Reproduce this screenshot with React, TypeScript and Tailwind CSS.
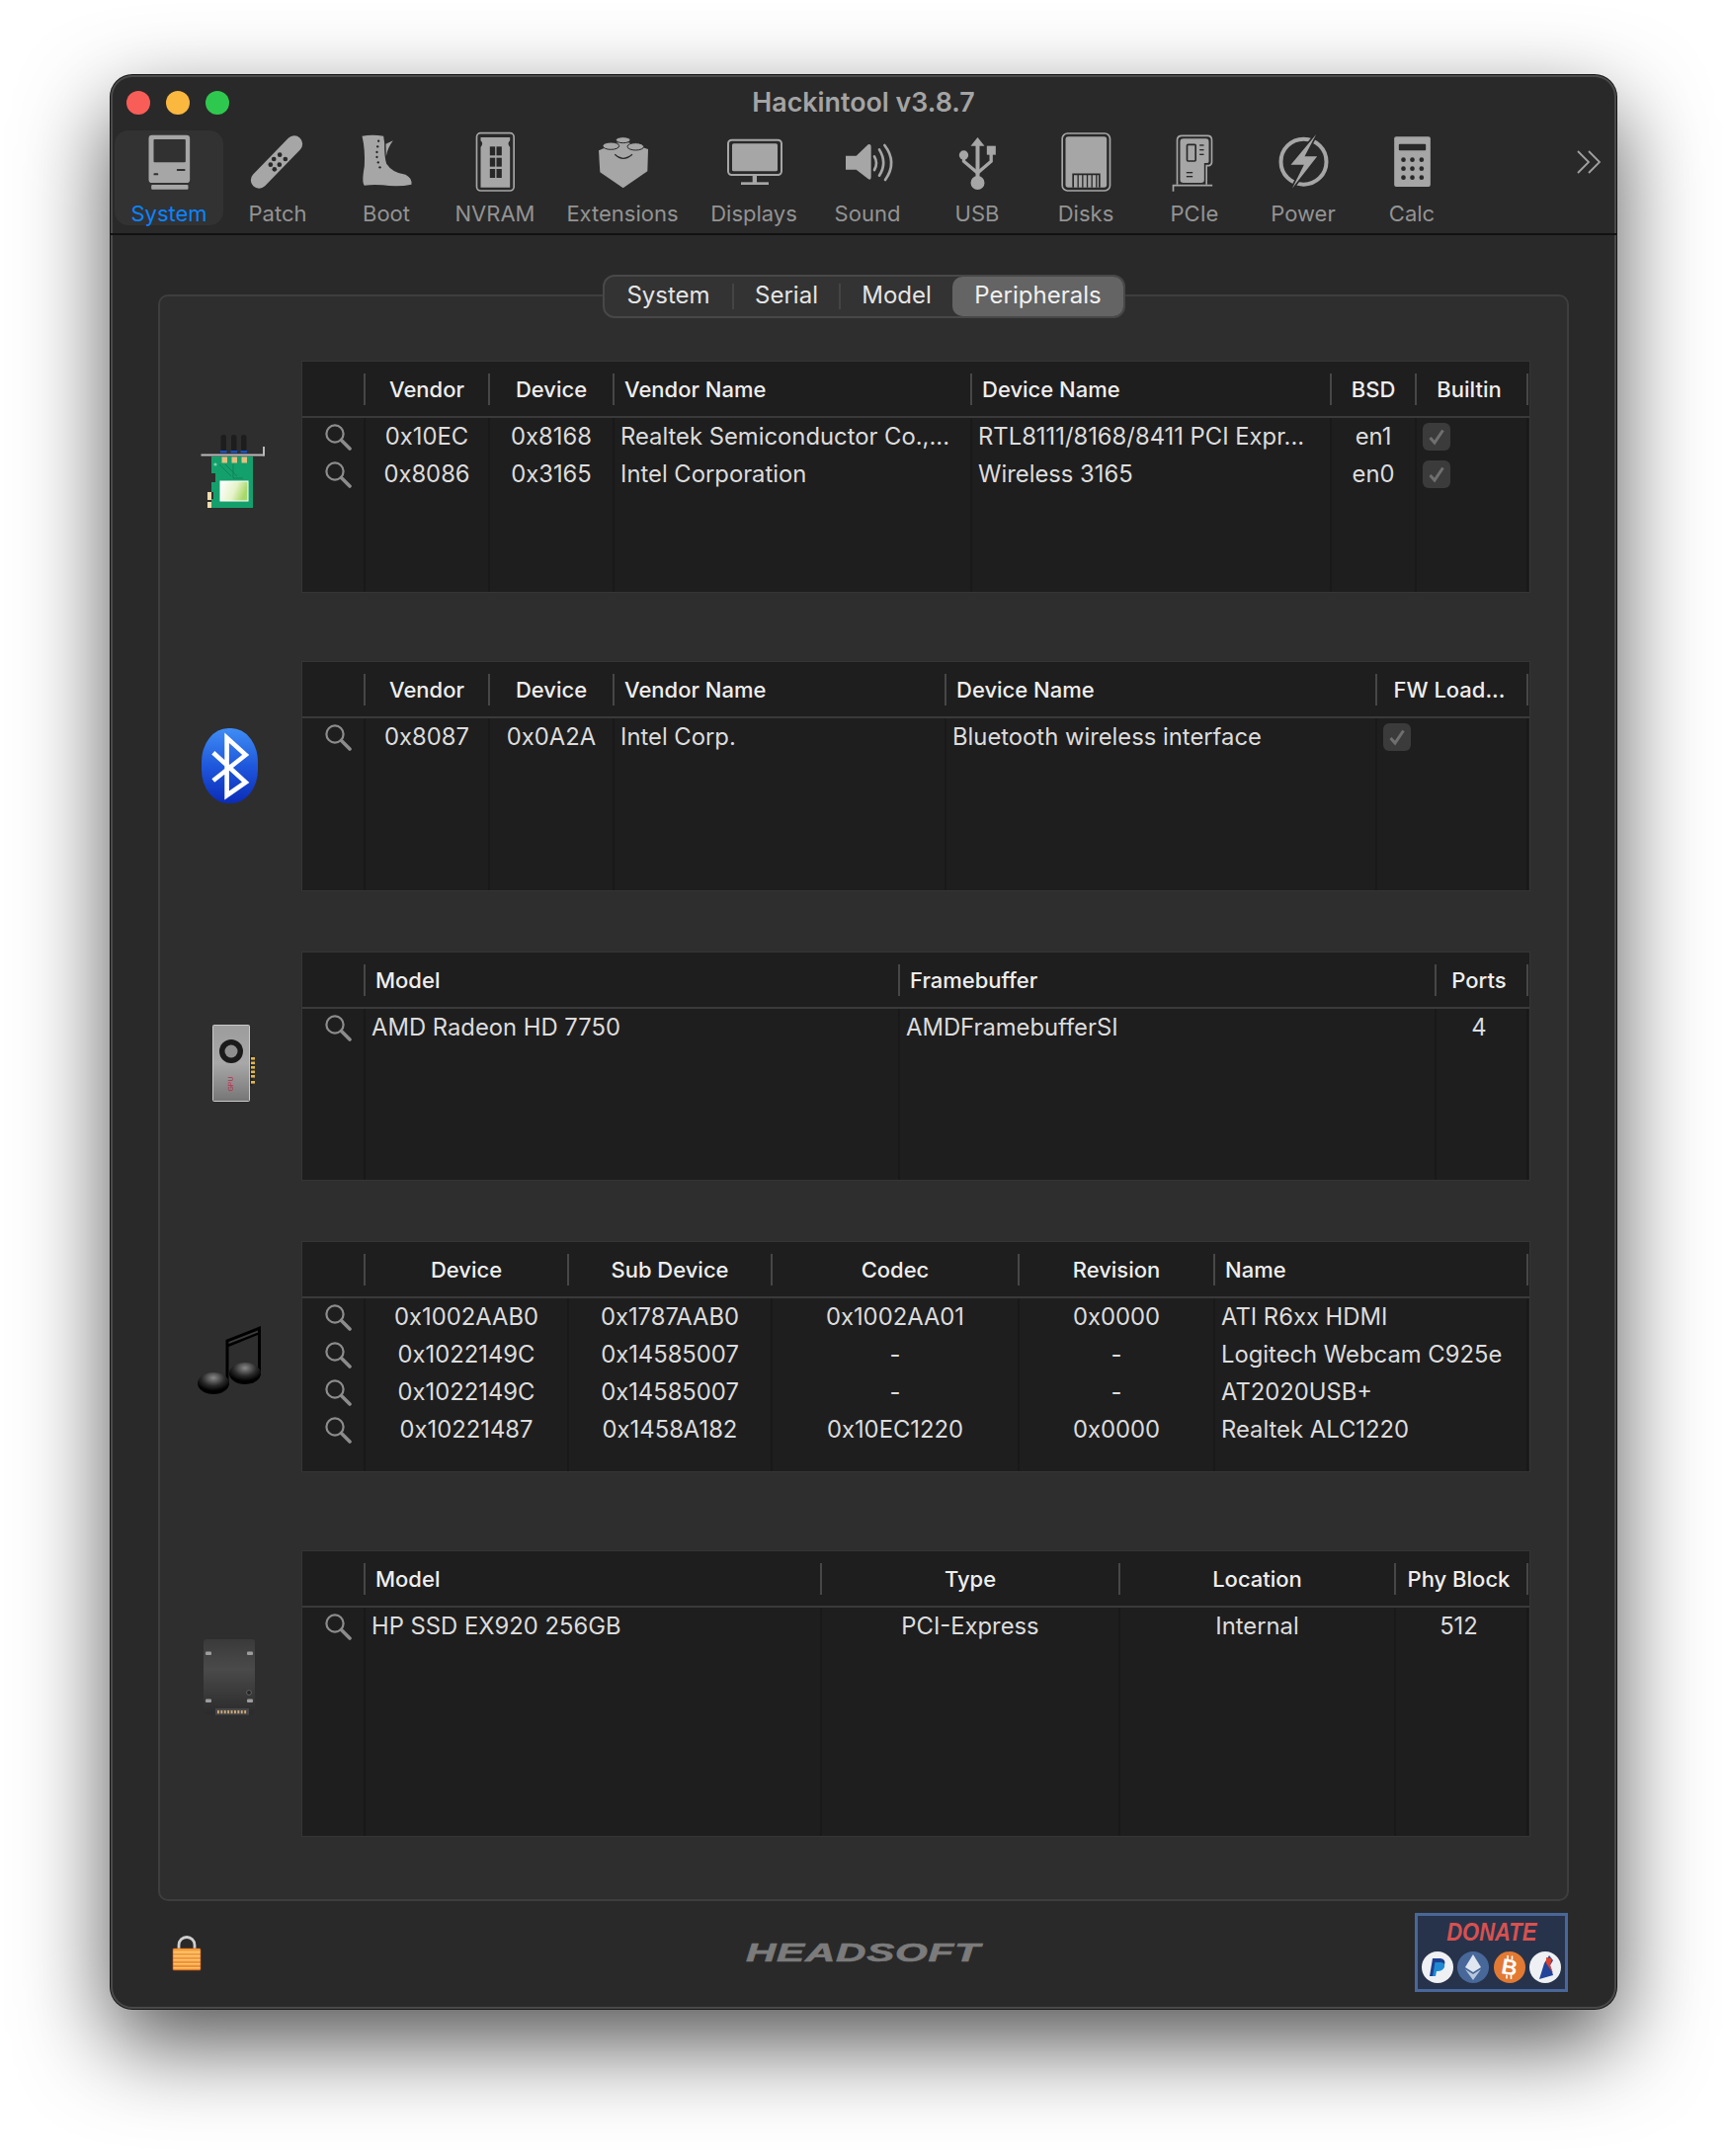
import React from "react";

const DARK = "#282828";
const G = "#a6a6a6";

function ToolIcon({ c, children }: { c: number; children: React.ReactNode }) {
  return (
    <svg width={100} height={70} viewBox={`${c - 150} 15 300 210`} className="shrink-0">
      {children}
    </svg>
  );
}

const icons: Record<string, React.ReactNode> = {
  System: (
    <ToolIcon c={151.5}>
      <rect x={90} y={35} width={125} height={145} rx={10} fill={G} />
      <rect x={105} y={48} width={97} height={70} rx={3} fill="#313131" />
      <rect x={105} y={151} width={14} height={6} rx={2} fill="#313131" />
      <rect x={175} y={138} width={26} height={6} rx={2} fill="#313131" />
      <rect x={98} y={186} width={112} height={14} rx={3} fill={G} />
    </ToolIcon>
  ),
  Patch: (
    <ToolIcon c={481.5}>
      <line x1={425} y1={172} x2={532} y2={62} stroke={G} strokeWidth={50} strokeLinecap="round" />
      {[
        [488, 95],
        [505, 108],
        [470, 108],
        [487, 125],
        [460, 125],
        [472, 139],
      ].map(([x, y]) => (
        <circle key={`${x}-${y}`} cx={x} cy={y} r={7} fill={DARK} />
      ))}
    </ToolIcon>
  ),
  Boot: (
    <ToolIcon c={811.5}>
      <path
        d="M738 38Q770 32 803 38L806 60Q805 100 812 122Q830 150 870 155Q890 165 888 185Q850 193 800 187Q770 185 745 188Q736 180 745 130Q748 80 738 38Z"
        fill={G}
      />
      <path d="M810 62L832 52Q815 75 811 100Z" fill={G} />
      {[
        [788, 53],
        [785, 70],
        [783, 87],
        [783, 102],
        [787, 118],
        [792, 133],
      ].map(([x, y]) => (
        <circle key={y} cx={x} cy={y} r={3.5} fill={DARK} />
      ))}
    </ToolIcon>
  ),
  NVRAM: (
    <ToolIcon c={1141.5}>
      <rect x={1086} y={29} width={113} height={175} rx={12} fill="none" stroke={G} strokeWidth={5} />
      <path d="M1098 42H1187V52Q1177 60 1187 72V194H1098V72Q1108 60 1098 52Z" fill={G} />
      {[70, 104, 138].map((y) =>
        [1126, 1146].map((x) => <rect key={`${x}${y}`} x={x} y={y} width={16} height={27} fill={DARK} />),
      )}
    </ToolIcon>
  ),
  Extensions: (
    <ToolIcon c={120}>
      <path d="M48 82L120 52L198 78L196 145L122 196L52 148Z" fill={G} />
      <ellipse cx={122} cy={50} rx={22} ry={9} fill={G} stroke={DARK} strokeWidth={3} />
      <ellipse cx={85} cy={68} rx={25} ry={11} fill={G} stroke={DARK} strokeWidth={3} />
      <ellipse cx={160} cy={70} rx={25} ry={11} fill={G} stroke={DARK} strokeWidth={3} />
      <path d="M97 94Q122 118 150 94" fill="none" stroke={DARK} strokeWidth={4} />
    </ToolIcon>
  ),
  Displays: (
    <ToolIcon c={519}>
      <rect x={441} y={50} width={162} height={106} rx={11} fill="none" stroke={G} strokeWidth={6} />
      <rect x={453} y={61} width={138} height={84} rx={5} fill={G} />
      <rect x={515} y={156} width={13} height={24} fill={G} />
      <rect x={480} y={178} width={84} height={8} fill={G} />
    </ToolIcon>
  ),
  Sound: (
    <ToolIcon c={864}>
      <path d="M798 98L830 98L866 64Q875 60 875 72V162Q875 174 866 168L830 140H798Z" fill={G} />
      <path d="M885 100Q897 120 885 141" fill="none" stroke={G} strokeWidth={8} strokeLinecap="round" />
      <path d="M900 79Q925 119 900 158" fill="none" stroke={G} strokeWidth={8} strokeLinecap="round" />
      <path d="M916 66Q956 118 918 171" fill="none" stroke={G} strokeWidth={8} strokeLinecap="round" />
    </ToolIcon>
  ),
  USB: (
    <ToolIcon c={1195.5}>
      <line x1={1197} y1={65} x2={1197} y2={170} stroke={G} strokeWidth={12} />
      <polygon points="1197,42 1218,68 1176,68" fill={G} />
      <circle cx={1197} cy={180} r={21} fill={G} />
      <circle cx={1155} cy={96} r={14} fill={G} />
      <rect x={1225} y={68} width={27} height={27} fill={G} />
      <path d="M1155 100V115L1197 150L1238 115V90" fill="none" stroke={G} strokeWidth={10} />
    </ToolIcon>
  ),
  Disks: (
    <ToolIcon c={115.5}>
      <rect x={44} y={30} width={145} height={174} rx={16} fill="none" stroke={G} strokeWidth={5} />
      <rect x={54} y={40} width={125} height={154} rx={8} fill={G} />
      <path d="M77 194V154H157V194" fill="none" stroke={DARK} strokeWidth={5} />
      {[92, 106, 120, 134, 148].map((x) => (
        <line key={x} x1={x} y1={154} x2={x} y2={194} stroke={DARK} strokeWidth={4} />
      ))}
    </ToolIcon>
  ),
  PCIe: (
    <ToolIcon c={445.5}>
      <path
        d="M393 185V50Q393 37 408 37H485Q498 37 498 50V118Q498 125 490 128H482V185"
        fill="none"
        stroke={G}
        strokeWidth={5}
      />
      <path
        d="M402 56Q402 46 412 46H480Q489 46 489 56V116Q489 120 482 120H475V172Q475 180 466 180H412Q402 180 402 172Z"
        fill={G}
      />
      <rect x={423} y={64} width={26} height={50} rx={3} fill="none" stroke={DARK} strokeWidth={5} />
      {[64, 78, 92].map((y) => (
        <rect key={y} x={461} y={y} width={13} height={4} fill={DARK} />
      ))}
      {[147, 159].map((y) => (
        <rect key={y} x={421} y={y} width={19} height={4} fill={DARK} />
      ))}
      <path d="M381 206V188H500" fill="none" stroke={G} strokeWidth={5} />
    </ToolIcon>
  ),
  Power: (
    <ToolIcon c={775.5}>
      <circle cx={777} cy={116} r={69} fill="none" stroke={G} strokeWidth={12} />
      <path d="M815 33L738 125H778L742 197L818 100H780Z" fill={G} stroke={DARK} strokeWidth={10} paintOrder="stroke" />
    </ToolIcon>
  ),
  Calc: (
    <ToolIcon c={1105.5}>
      <rect x={1052} y={40} width={110} height={152} rx={6} fill={G} />
      <rect x={1066} y={62} width={82} height={20} rx={3} fill={DARK} />
      {[110, 137, 164].map((y) =>
        [1080, 1107, 1135].map((x) => <circle key={`${x}${y}`} cx={x} cy={y} r={7} fill={DARK} />),
      )}
    </ToolIcon>
  ),
};

const tools: { name: string; w: string }[] = [
  { name: "System", w: "w-[110px]" },
  { name: "Patch", w: "w-[110px]" },
  { name: "Boot", w: "w-[110px]" },
  { name: "NVRAM", w: "w-[110px]" },
  { name: "Extensions", w: "w-[148px]" },
  { name: "Displays", w: "w-[118px]" },
  { name: "Sound", w: "w-[112px]" },
  { name: "USB", w: "w-[110px]" },
  { name: "Disks", w: "w-[110px]" },
  { name: "PCIe", w: "w-[110px]" },
  { name: "Power", w: "w-[110px]" },
  { name: "Calc", w: "w-[110px]" },
];

function Magnifier() {
  return (
    <svg width={28} height={28} viewBox="0 0 28 28" className="block">
      <circle cx={11} cy={11} r={8.6} fill="none" stroke="#8c8c8c" strokeWidth={2.2} />
      <line x1={17.5} y1={17.5} x2={26} y2={26} stroke="#8c8c8c" strokeWidth={3.6} strokeLinecap="round" />
    </svg>
  );
}

function Check() {
  return (
    <div className="flex h-[28px] w-[28px] items-center justify-center rounded-[6px] bg-[#3b3b3b]">
      <svg width={20} height={20} viewBox="0 0 20 20">
        <path d="M3.5 11L8 16L16.5 3.5" fill="none" stroke="#6f6f6f" strokeWidth={3} />
      </svg>
    </div>
  );
}

type Col = { w: number; label: string; center?: boolean; cells: (string | boolean)[] };

function Table({ cols, rows, className }: { cols: Col[]; rows: number; className: string }) {
  const all: Col[] = [{ w: 64, label: "", center: false, cells: [] }, ...cols];
  const lastPad = (i: number) => (i === all.length - 1 ? "pr-[5px]" : "");
  return (
    <div className={`flex w-[1242px] flex-col bg-[#1e1e1e] shadow-[0_0_0_1px_#353535] ${className}`}>
      <div className="flex h-[57px] shrink-0 border-b-2 border-[#3a3a3a] pt-[12px]">
        {all.map((c, i) => (
          <div
            key={i}
            style={{ width: c.w }}
            className={`flex h-[32px] shrink-0 items-center border-r-2 border-[#474747] text-[22px] font-medium text-[#eeeeee] ${
              c.center ? `justify-center ${lastPad(i)}` : "pl-[10px]"
            }`}
          >
            {c.label}
          </div>
        ))}
      </div>
      <div className="flex min-h-0 flex-1">
        {all.map((c, i) => (
          <div key={i} style={{ width: c.w }} className="flex shrink-0 flex-col border-r-2 border-[#191919]">
            {i === 0
              ? Array.from({ length: rows }).map((_, r) => (
                  <div key={r} className="flex h-[38px] items-center justify-center pl-[9px]">
                    <Magnifier />
                  </div>
                ))
              : c.cells.map((t, r) => (
                  <div
                    key={r}
                    className={`flex h-[38px] items-center whitespace-nowrap text-[23.8px] text-[#dcdcdc] ${
                      c.center && t !== true ? `justify-center ${lastPad(i)}` : "pl-[6px]"
                    }`}
                  >
                    {t === true ? <Check /> : t}
                  </div>
                ))}
          </div>
        ))}
      </div>
    </div>
  );
}

function NicIcon() {
  return (
    <svg width={70} height={85} viewBox="200 435 70 85" className="block">
      <defs>
        <linearGradient id="chip" x1="0" y1="0" x2="1" y2="0.3">
          <stop offset="0" stopColor="#ffffff" />
          <stop offset="0.6" stopColor="#e6f3c8" />
          <stop offset="1" stopColor="#a9d86a" />
        </linearGradient>
      </defs>
      {[223.5, 234, 244].map((x) => (
        <g key={x}>
          <rect x={x} y={440} width={5.5} height={17} rx={2.5} fill="#1d1d1d" />
          <rect x={x - 0.5} y={456} width={6.5} height={2.4} fill="#1650c8" />
        </g>
      ))}
      <rect x={203.5} y={459.5} width={64} height={2} fill="#b9b9b9" />
      <rect x={266} y={452} width={2} height={9.5} fill="#b9b9b9" />
      <path d="M214 462H256V514H214V505H216V498H214V488H218V479H214Z" fill="#14a06c" />
      <g fill="#e7bf80">
        <rect x={224.5} y={462.5} width={5.5} height={6} />
        <rect x={234.5} y={462.5} width={5.5} height={6} />
        <rect x={244.5} y={462.5} width={5.5} height={6} />
      </g>
      <path d="M222 470L234 482M228 470L240 482M236 470V484H246" stroke="#0c7d52" strokeWidth={0.8} fill="none" />
      <circle cx={218} cy={470} r={1.6} fill="#7ed0ad" />
      <rect x={222.5} y={486.5} width={29} height={21} fill="#fff" />
      <rect x={223.5} y={487.5} width={27} height={19} fill="url(#chip)" />
      <rect x={210} y={498} width={4} height={8} fill="#f1dcae" />
      <rect x={210} y={508} width={4} height={6} fill="#f1dcae" />
    </svg>
  );
}

function BtIcon() {
  return (
    <svg width={70} height={80} viewBox="200 735 70 80" className="block">
      <defs>
        <linearGradient id="bt" x1="0" y1="0" x2="0" y2="1">
          <stop offset="0" stopColor="#3f8df5" />
          <stop offset="0.5" stopColor="#1f58dc" />
          <stop offset="1" stopColor="#0b2cb8" />
        </linearGradient>
      </defs>
      <rect x={204} y={737} width={57} height={76} rx={27} ry={34} fill="url(#bt)" />
      <path
        d="M215.8 761.7L248.7 791.7L229.6 805V746.7L248.7 764L215.8 790"
        fill="none"
        stroke="#fff"
        strokeWidth={4.6}
      />
    </svg>
  );
}

function GpuIcon() {
  return (
    <svg width={70} height={82} viewBox="200 1035 70 82" className="block">
      <defs>
        <linearGradient id="gpu" x1="0" y1="0" x2="0" y2="1">
          <stop offset="0" stopColor="#9c9c9c" />
          <stop offset="0.5" stopColor="#a8a8a8" />
          <stop offset="1" stopColor="#757575" />
        </linearGradient>
      </defs>
      <rect x={252.5} y={1068} width={3} height={31} fill="#222" />
      {[1070, 1074.5, 1079, 1083.5, 1088, 1094].map((y) => (
        <rect key={y} x={254} y={y} width={4} height={2.6} fill="#e2b64a" />
      ))}
      <rect x={215.5} y={1037.5} width={37} height={77} rx={1} fill="url(#gpu)" stroke="#c9c9c9" strokeWidth={1} />
      <circle cx={234} cy={1064} r={12} fill="#1b1b1b" />
      <circle cx={234} cy={1064} r={6.5} fill="#8f8f8f" />
      <text
        x={234}
        y={1097}
        fontSize={7}
        fill="#c42a45"
        textAnchor="middle"
        fontFamily="'Liberation Sans',sans-serif"
        transform="rotate(-90 234 1097)"
        dominantBaseline="middle"
      >
        GPU
      </text>
    </svg>
  );
}

function MusicIcon() {
  return (
    <svg width={70} height={73} viewBox="200 1340 70 73" className="block">
      <defs>
        <radialGradient id="note" cx="0.5" cy="0.25" r="0.6">
          <stop offset="0" stopColor="#8a8a8a" />
          <stop offset="0.6" stopColor="#2a2a2a" />
          <stop offset="1" stopColor="#000" />
        </radialGradient>
      </defs>
      <path d="M228.5 1356L264 1342V1392H261V1351L231.5 1363V1402H228.5Z" fill="#000" />
      <path d="M231.5 1358L261 1346.5V1348.5L231.5 1360Z" fill="#3c3c3c" />
      <ellipse cx={216} cy={1400} rx={16} ry={11} fill="url(#note)" />
      <ellipse cx={248} cy={1390} rx={16} ry={11} fill="url(#note)" />
    </svg>
  );
}

function SsdIcon() {
  return (
    <svg width={70} height={85} viewBox="200 1655 70 85" className="block">
      <defs>
        <linearGradient id="ssd" x1="0" y1="0" x2="0" y2="1">
          <stop offset="0" stopColor="#3a3a3a" />
          <stop offset="0.4" stopColor="#4a4a4a" />
          <stop offset="1" stopColor="#2b2b2b" />
        </linearGradient>
      </defs>
      <rect x={206} y={1659} width={52} height={76} rx={3} fill="url(#ssd)" />
      {[
        [208, 1671.5],
        [250, 1671.5],
        [208, 1719.5],
        [250, 1719.5],
      ].map(([x, y]) => (
        <rect key={`${x}${y}`} x={x} y={y} width={6} height={3.5} rx={1} fill="#9d9d9d" />
      ))}
      <circle cx={252} cy={1713} r={2.4} fill="#222" stroke="#777" strokeWidth={0.7} />
      <rect x={218} y={1729} width={34} height={6.5} fill="#474747" />
      {[0, 1, 2, 3, 4, 5, 6, 7, 8].map((i) => (
        <rect key={i} x={220 + i * 3.4} y={1731} width={1.9} height={3.2} fill="#c9a77a" />
      ))}
    </svg>
  );
}

function LockIcon() {
  return (
    <svg width={30} height={36} viewBox="0 0 30 36" className="block">
      <defs>
        <linearGradient id="lk" x1="0" y1="0" x2="0" y2="1">
          <stop offset="0" stopColor="#f7a840" />
          <stop offset="1" stopColor="#f08a25" />
        </linearGradient>
      </defs>
      <path d="M7 15V9.5A8 8 0 0 1 23 9.5V15" fill="none" stroke="#cfcfcf" strokeWidth={2.8} />
      <rect x={1} y={13} width={28} height={22} rx={1} fill="url(#lk)" stroke="#c9511a" strokeWidth={0.6} />
      {[16, 20, 24, 28, 32].map((y) => (
        <rect key={y} x={1.5} y={y} width={27} height={1.4} fill="#fbc986" />
      ))}
    </svg>
  );
}

function Coin({ children, bg }: { children: React.ReactNode; bg: string }) {
  return (
    <svg width={32} height={32} viewBox="0 0 32 32" className="block">
      <circle cx={16} cy={16} r={16} fill={bg} />
      {children}
    </svg>
  );
}

function Donate() {
  return (
    <div className="flex h-[80px] w-[155px] flex-col items-center border-[3px] border-[#49679a] bg-[#27334b]">
      <div className="mb-[2px] h-[34px] scale-x-[0.88] text-[25px] font-bold italic leading-[32px] text-[#d8514f] font-['Liberation_Sans',sans-serif]">
        DONATE
      </div>
      <div className="flex gap-[4.5px]">
        <Coin bg="#eef0f3">
          <path d="M11 7H19Q25 8 23 14Q21 19 15 19H13.5L12.5 25H8Z" fill="#1b3f8f" />
          <path d="M13.5 11H20Q24 12 23 16Q21 20 16 20H15L14 25H11Z" fill="#1f8ad3" />
        </Coin>
        <Coin bg="#48689a">
          <polygon points="16,3 24,16 16,21 8,16" fill="#dfe6f0" />
          <polygon points="16,23 24,18 16,29 8,18" fill="#b9c7dc" />
        </Coin>
        <Coin bg="#e27a33">
          <text
            x={16}
            y={23.5}
            textAnchor="middle"
            fontSize={22}
            fontWeight={700}
            fill="#fff"
            fontFamily="'Liberation Sans',sans-serif"
            transform="rotate(10 16 16)"
          >
            B
          </text>
          <path d="M14 4V8M18.5 4.5V8.5M13 23.5V27.5M17.5 24V28" stroke="#fff" strokeWidth={1.6} />
        </Coin>
        <Coin bg="#eef0f3">
          <polygon points="20,4 24,9 21,14 24,24 10,28 15,12" fill="#23449b" />
          <polygon points="17,6 23,7 21,14 24,22 17,12" fill="#d9432f" />
        </Coin>
      </div>
    </div>
  );
}

export default function App() {
  return (
    <div className="h-[2182px] w-[1748px] overflow-hidden bg-white pl-[112px] pt-[76px] font-['Inter',sans-serif]">
      <div className="flex h-[1957px] w-[1524px] flex-col rounded-[22px] bg-[#292929] shadow-[0_0_0_1px_#161616,inset_0_0_0_2px_#4a4a4a,0_35px_90px_rgba(0,0,0,0.68)]">
        {/* title bar */}
        <div className="relative flex h-[56px] shrink-0 items-center pl-[16px]">
          <div className="flex gap-[16px]">
            <div className="h-[24px] w-[24px] rounded-full bg-[#f95d57]" />
            <div className="h-[24px] w-[24px] rounded-full bg-[#fbb83f]" />
            <div className="h-[24px] w-[24px] rounded-full bg-[#2fc84f]" />
          </div>
          <div className="absolute inset-x-0 top-[12px] text-center text-[26.8px] font-semibold leading-[30px] text-[#a4a4a4]">
            Hackintool v3.8.7
          </div>
        </div>
        {/* toolbar */}
        <div className="flex h-[106px] shrink-0 border-b-2 border-[#121212] pl-[4px]">
          {tools.map((t) => (
            <div
              key={t.name}
              className={`flex h-[96px] shrink-0 flex-col items-center rounded-[14px] ${t.w} ${
                t.name === "System" ? "bg-[#323232]" : ""
              }`}
            >
              <div className="-mt-[2px] mb-[1px]">{icons[t.name]}</div>
              <div
                className={`text-[22px] leading-[30px] ${t.name === "System" ? "text-[#0a84ff]" : "text-[#939393]"}`}
              >
                {t.name}
              </div>
            </div>
          ))}
          <div className="ml-[111px] mt-[20px]">
            <svg width={26} height={24} viewBox="0 0 26 24" className="block">
              <path d="M2 1L13 12L2 23M13 1L24 12L13 23" fill="none" stroke="#a0a0a0" strokeWidth={1.8} />
            </svg>
          </div>
        </div>
        {/* segmented control */}
        <div className="relative z-10 ml-[498px] mt-[40px] flex h-[44px] w-[529px] shrink-0 items-center rounded-[12px] border-2 border-[#484848] bg-[#333333] text-[24px] text-[#e4e4e4]">
          <div className="w-[129px] pb-[3px] text-center">System</div>
          <div className="h-[26px] w-[2px] bg-[#444444]" />
          <div className="w-[106px] pb-[3px] text-center">Serial</div>
          <div className="h-[26px] w-[2px] bg-[#444444]" />
          <div className="w-[113px] pb-[3px] text-center">Model</div>
          <div className="flex h-[40px] w-[173px] items-center justify-center rounded-[10px] bg-[#646464] pb-[3px] text-[#f0f0f0]">
            Peripherals
          </div>
        </div>
        {/* panel */}
        <div className="-mt-[24px] ml-[48px] flex h-[1626px] w-[1428px] shrink-0 flex-col rounded-[10px] border-2 border-[#3e3e3e] bg-[#2e2e2e] pt-[66px]">
          <div className="flex">
            <div className="w-[144px] shrink-0 pl-[38px] pt-[69px]">
              <NicIcon />
            </div>
            <Table
              className="h-[233px]"
              rows={2}
              cols={[
                { w: 126, label: "Vendor", center: true, cells: ["0x10EC", "0x8086"] },
                { w: 126, label: "Device", center: true, cells: ["0x8168", "0x3165"] },
                { w: 362, label: "Vendor Name", cells: ["Realtek Semiconductor Co.,...", "Intel Corporation"] },
                { w: 364, label: "Device Name", cells: ["RTL8111/8168/8411 PCI Expr...", "Wireless 3165"] },
                { w: 86, label: "BSD", center: true, cells: ["en1", "en0"] },
                { w: 113, label: "Builtin", center: true, cells: [true, true] },
              ]}
            />
          </div>
          <div className="mt-[71px] flex">
            <div className="w-[144px] shrink-0 pl-[38px] pt-[65px]">
              <BtIcon />
            </div>
            <Table
              className="h-[231px]"
              rows={1}
              cols={[
                { w: 126, label: "Vendor", center: true, cells: ["0x8087"] },
                { w: 126, label: "Device", center: true, cells: ["0x0A2A"] },
                { w: 336, label: "Vendor Name", cells: ["Intel Corp."] },
                { w: 436, label: "Device Name", cells: ["Bluetooth wireless interface"] },
                { w: 153, label: "FW Load...", center: true, cells: [true] },
              ]}
            />
          </div>
          <div className="mt-[63px] flex">
            <div className="w-[144px] shrink-0 pl-[38px] pt-[71px]">
              <GpuIcon />
            </div>
            <Table
              className="h-[230px]"
              rows={1}
              cols={[
                { w: 541, label: "Model", cells: ["AMD Radeon HD 7750"] },
                { w: 543, label: "Framebuffer", cells: ["AMDFramebufferSI"] },
                { w: 93, label: "Ports", center: true, cells: ["4"] },
              ]}
            />
          </div>
          <div className="mt-[63px] flex">
            <div className="w-[144px] shrink-0 pl-[38px] pt-[83px]">
              <MusicIcon />
            </div>
            <Table
              className="h-[232px]"
              rows={4}
              cols={[
                { w: 206, label: "Device", center: true, cells: ["0x1002AAB0", "0x1022149C", "0x1022149C", "0x10221487"] },
                { w: 206, label: "Sub Device", center: true, cells: ["0x1787AAB0", "0x14585007", "0x14585007", "0x1458A182"] },
                { w: 250, label: "Codec", center: true, cells: ["0x1002AA01", "-", "-", "0x10EC1220"] },
                { w: 198, label: "Revision", center: true, cells: ["0x0000", "-", "-", "0x0000"] },
                { w: 317, label: "Name", cells: ["ATI R6xx HDMI", "Logitech Webcam C925e", "AT2020USB+", "Realtek ALC1220"] },
              ]}
            />
          </div>
          <div className="mt-[81px] flex">
            <div className="w-[144px] shrink-0 pl-[38px] pt-[85px]">
              <SsdIcon />
            </div>
            <Table
              className="h-[288px]"
              rows={1}
              cols={[
                { w: 462, label: "Model", cells: ["HP SSD EX920 256GB"] },
                { w: 302, label: "Type", center: true, cells: ["PCI-Express"] },
                { w: 279, label: "Location", center: true, cells: ["Internal"] },
                { w: 134, label: "Phy Block", center: true, cells: ["512"] },
              ]}
            />
          </div>
        </div>
        {/* footer */}
        <div className="ml-[48px] mr-[49px] mt-[12px] grid grid-cols-3 items-center">
          <div className="pl-[14px] pt-[2px]">
            <LockIcon />
          </div>
          <div className="flex justify-center">
            <span className="origin-center scale-x-[1.68] text-[25px] font-bold italic leading-[30px] tracking-[0.5px] text-[#7b7b7b] [-webkit-text-stroke:0.6px_#7b7b7b] font-['Liberation_Sans',sans-serif]">
              HEADSOFT
            </span>
          </div>
          <div className="flex justify-end">
            <Donate />
          </div>
        </div>
      </div>
    </div>
  );
}
